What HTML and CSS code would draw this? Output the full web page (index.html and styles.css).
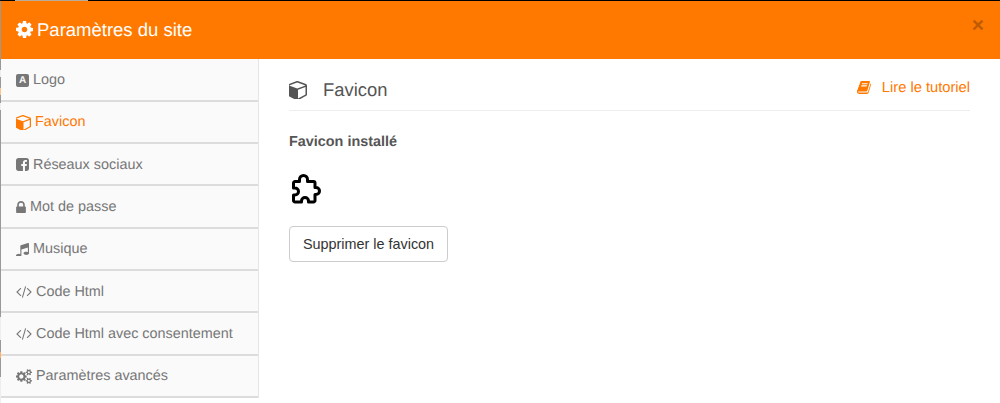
FILE: index.html
```html
<!DOCTYPE html>
<html lang="fr">
<head>
    <meta charset="UTF-8">
    <title>Paramètres du site</title>
    <link rel="stylesheet" href="styles.css">
</head>
<body>
    <div class="top-strip"></div>
    <div class="modal">
        <header class="modal-header">
            <h2 class="modal-title">
                <svg class="icon-title" viewBox="128 128 1536 1536"><path d="M1152 896q0-106-75-181t-181-75-181 75-75 181 75 181 181 75 181-75 75-181zm512-109v222q0 12-8 23t-20 13l-185 28q-19 54-39 91 35 50 107 138 10 12 10 25t-9 23q-27 37-99 108t-94 71q-12 0-26-9l-138-108q-44 23-91 38-16 136-29 186-7 28-36 28h-222q-14 0-24.500-8.500t-11.500-21.500l-28-184q-49-16-90-37l-141 107q-10 9-25 9-14 0-25-11-126-114-165-168-7-10-7-23 0-12 8-23 15-21 51-66.500t54-70.500q-27-50-41-99l-183-27q-13-2-21-12.500t-8-23.500v-222q0-12 8-23t19-13l186-28q14-46 39-92-40-57-107-138-10-12-10-24 0-10 9-23 26-36 98.500-107.500t94.500-71.500q13 0 26 10l138 107q44-23 91-38 16-136 29-186 7-28 36-28h222q14 0 24.500 8.500t11.500 21.500l28 184q49 16 90 37l142-107q9-9 24-9 13 0 25 10 129 119 165 170 7 8 7 22 0 12-8 23-15 21-51 66.500t-54 70.500q26 50 41 98l183 28q13 2 21 12.500t8 23.500z"/></svg>
                Paramètres du site
            </h2>
            <span class="modal-close">×</span>
        </header>

        <div class="modal-body">
            <!-- menu -->
            <nav class="sidebar">
                <a class="menu-item"><span class="icon-badge">A</span>Logo</a>
                <a class="menu-item active"><svg class="icon icon-cube-small" viewBox="128 128 1536 1536"><path d="M896 1629l640-349v-636l-640 233v752zm-64-865l698-254-698-254-698 254zm832-252v768q0 35-18 65t-49 47l-704 384q-28 16-61 16t-61-16l-704-384q-31-17-49-47t-18-65v-768q0-40 23-73t61-47l704-256q22-8 44-8t44 8l704 256q38 14 61 47t23 73z"/></svg>Favicon</a>
                <a class="menu-item"><svg class="icon" viewBox="128 128 1536 1536"><path d="M1376 128q119 0 203.500 84.500t84.500 203.500v960q0 119-84.500 203.500t-203.500 84.500h-188v-595h199l30-232h-229v-148q0-56 23.500-84t91.500-28l122-1v-207q-63-9-178-9-136 0-217.500 80t-81.500 226v171h-200v232h200v595h-532q-119 0-203.500-84.500t-84.500-203.500v-960q0-119 84.500-203.500t203.500-84.500h960z"/></svg>Réseaux sociaux</a>
                <a class="menu-item"><svg class="icon icon-lock" viewBox="320 128 1152 1536"><path d="M640 768h512v-192q0-106-75-181t-181-75-181 75-75 181v192zm832 96v576q0 40-28 68t-68 28h-960q-40 0-68-28t-28-68v-576q0-40 28-68t68-28h32v-192q0-184 132-316t316-132 316 132 132 316v192h32q40 0 68 28t28 68z"/></svg>Mot de passe</a>
                <a class="menu-item"><svg class="icon" viewBox="128 128 1536 1536"><path d="M1664 224v1120q0 50-34 89t-86 60.500-103.500 32-96.500 10.500-96.500-10.500-103.500-32-86-60.500-34-89 34-89 86-60.500 103.500-32 96.500-10.500q105 0 192 39v-537l-768 237v709q0 50-34 89t-86 60.500-103.500 32-96.500 10.500-96.500-10.500-103.500-32-86-60.500-34-89 34-89 86-60.500 103.500-32 96.500-10.500q105 0 192 39v-967q0-31 19-56.500t49-35.500l832-256q12-4 28-4 40 0 68 28t28 68z"/></svg>Musique</a>
                <a class="menu-item"><svg class="icon icon-wide" viewBox="0 0 1920 1792"><path d="M617 1399l-50 50q-10 10-23 10t-23-10l-466-466q-10-10-10-23t10-23l466-466q10-10 23-10t23 10l50 50q10 10 10 23t-10 23l-393 393 393 393q10 10 10 23t-10 23zm591-1067l-373 1291q-4 13-15.500 19.500t-23.500 2.500l-62-17q-13-4-19.500-15.500t-2.500-24.500l373-1291q4-13 15.500-19.500t23.500-2.500l62 17q13 4 19.500 15.500t2.500 24.500zm657 651l-466 466q-10 10-23 10t-23-10l-50-50q-10-10-10-23t10-23l393-393-393-393q-10-10-10-23t10-23l50-50q10-10 23-10t23 10l466 466q10 10 10 23t-10 23z"/></svg>Code Html</a>
                <a class="menu-item"><svg class="icon icon-wide" viewBox="0 0 1920 1792"><path d="M617 1399l-50 50q-10 10-23 10t-23-10l-466-466q-10-10-10-23t10-23l466-466q10-10 23-10t23 10l50 50q10 10 10 23t-10 23l-393 393 393 393q10 10 10 23t-10 23zm591-1067l-373 1291q-4 13-15.500 19.500t-23.500 2.500l-62-17q-13-4-19.500-15.500t-2.500-24.500l373-1291q4-13 15.500-19.500t23.500-2.500l62 17q13 4 19.500 15.500t2.500 24.500zm657 651l-466 466q-10 10-23 10t-23-10l-50-50q-10-10-10-23t10-23l393-393-393-393q-10-10-10-23t10-23l50-50q10-10 23-10t23 10l466 466q10 10 10 23t-10 23z"/></svg>Code Html avec consentement</a>
                <a class="menu-item"><svg class="icon icon-wide" viewBox="0 0 1920 1792"><path d="M896 896q0-106-75-181t-181-75-181 75-75 181 75 181 181 75 181-75 75-181zm768 512q0-52-38-90t-90-38-90 38-38 90q0 53 37.500 90.500t90.500 37.500 90.500-37.500 37.500-90.500zm0-1024q0-52-38-90t-90-38-90 38-38 90q0 53 37.500 90.500t90.500 37.500 90.500-37.500 37.500-90.500zm-384 421v185q0 10-7 19.500t-16 10.500l-155 24q-11 35-32 76 34 48 90 115 7 11 7 20 0 12-7 19-23 30-82.500 89.500t-78.500 59.500q-11 0-21-7l-115-90q-37 19-77 31-11 108-23 155-7 24-30 24h-186q-11 0-20-7.500t-10-17.500l-23-153q-34-10-75-31l-118 89q-7 7-20 7-11 0-21-8-144-133-144-160 0-9 7-19 10-14 41-53t47-61q-23-44-35-82l-152-24q-10-1-17-9.500t-7-19.500v-185q0-10 7-19.500t16-10.500l155-24q11-35 32-76-34-48-90-115-7-11-7-20 0-12 7-20 22-30 82-89t79-59q11 0 21 7l115 90q34-18 77-32 11-108 23-154 7-24 30-24h186q11 0 20 7.500t10 17.500l23 153q34 10 75 31l118-89q8-7 20-7 11 0 21 8 144 133 144 160 0 8-7 19-12 16-42 54t-45 60q23 48 34 82l152 23q10 2 17 10.500t7 19.500zm640 533v140q0 16-149 31-12 27-30 52 51 113 51 138 0 4-4 7-122 71-124 71-8 0-46-47t-52-68q-20 2-30 2t-30-2q-14 21-52 68t-46 47q-2 0-124-71-4-3-4-7 0-25 51-138-18-25-30-52-149-15-149-31v-140q0-16 149-31 13-29 30-52-51-113-51-138 0-4 4-7 4-2 35-20t59-34 30-16q8 0 46 46.500t52 67.500q20-2 30-2t30 2q51-71 92-112l6-2q4 0 124 70 4 3 4 7 0 25-51 138 17 23 30 52 149 15 149 31zm0-1024v140q0 16-149 31-12 27-30 52 51 113 51 138 0 4-4 7-122 71-124 71-8 0-46-47t-52-68q-20 2-30 2t-30-2q-14 21-52 68t-46 47q-2 0-124-71-4-3-4-7 0-25 51-138-18-25-30-52-149-15-149-31v-140q0-16 149-31 13-29 30-52-51-113-51-138 0-4 4-7 4-2 35-20t59-34 30-16q8 0 46 46.500t52 67.500q20-2 30-2t30 2q51-71 92-112l6-2q4 0 124 70 4 3 4 7 0 25-51 138 17 23 30 52 149 15 149 31z"/></svg>Paramètres avancés</a>
            </nav>

            <!-- contenu -->
            <main class="content">
                <div class="content-head">
                    <h3 class="content-title">
                        <svg class="icon-cube" viewBox="128 128 1536 1536"><path d="M896 1629l640-349v-636l-640 233v752zm-64-865l698-254-698-254-698 254zm832-252v768q0 35-18 65t-49 47l-704 384q-28 16-61 16t-61-16l-704-384q-31-17-49-47t-18-65v-768q0-40 23-73t61-47l704-256q22-8 44-8t44 8l704 256q38 14 61 47t23 73z"/></svg>
                        Favicon
                    </h3>
                    <a class="tuto-link">
                        <svg class="icon-book" viewBox="64 128 1664 1536"><path d="M1703 478q40 57 18 129l-275 906q-19 64-76.500 107.500t-122.500 43.500h-923q-77 0-148.500-53.500t-99.500-131.500q-24-67-2-127 0-4 3-27t4-37q1-8-3-21.500t-3-19.500q2-11 8-21t16.500-23.500 16.500-23.500q23-38 45-91.500t30-91.500q3-10 .5-30t-.5-28q3-11 17-28t17-23q21-36 42-92t25-90q1-9-2.500-32t.5-28q4-13 22-30.500t22-22.500q19-26 42.500-84.500t27.500-96.500q1-8-3-25.500t-2-26.500q2-8 9-18t18-23 17-21q8-12 16.500-35t15-43.500 17.500-44.500 22-39 30-30 41-14.500 54 6.500l-1 3q43-10 58-10h761q74 0 114 56t18 130l-274 906q-36 119-71.500 153.500t-128.500 34.500h-869q-27 0-38 15-11 16-1 43 24 70 144 70h923q29 0 56-15.500t35-41.500l300-987q7-22 5-57 38 15 59 43zm-1064 2q-4 13 2 22.500t20 9.500h608q13 0 25.500-9.500t16.500-22.500l21-64q4-13-2-22.500t-20-9.500h-608q-13 0-25.500 9.500t-16.500 22.500zm-83 256q-4 13 2 22.500t20 9.500h608q13 0 25.500-9.500t16.500-22.500l21-64q4-13-2-22.500t-20-9.500h-608q-13 0-25.500 9.500t-16.500 22.500z"/></svg>
                        Lire le tutoriel
                    </a>
                </div>
                <p class="installed">Favicon installé</p>
                <svg class="puzzle" viewBox="0 0 30 30"><path d="M7.500 7.500v-2a4 4 0 0 1 8 0v2h6a1.500 1.500 0 0 1 1.500 1.500v4.500h1a3.500 3.500 0 0 1 0 7h-1v6a1.500 1.500 0 0 1-1.500 1.500h-5v-1a3.500 3.500 0 0 0-7 0v1h-6.500a1.500 1.500 0 0 1-1.500-1.500v-5.500h1.500a3.500 3.500 0 0 0 0-7h-1.500v-5a1.500 1.500 0 0 1 1.500-1.500z"/></svg>
                <button class="btn-delete">Supprimer le favicon</button>
            </main>
        </div>
    </div>
</body>
</html>
```

FILE: styles.css
```css
html, body {
    height: 100%;
}

body {
    margin: 0;
    overflow: hidden;
    background: linear-gradient(to bottom,
        #999 70px, #eee 70px, #eee 77px,
        #999 77px, #999 88px, #ffc48a 88px, #ffc48a 95px,
        #999 95px, #999 103px, #eee 103px, #eee 110px,
        #999 110px, #999 317px, #eee 317px, #eee 340px,
        #999 340px, #999 352px, #ffb066 352px, #ffb066 358px,
        #999 358px, #999 377px, #eee 377px);
    font-family: "Liberation Sans", Arial, sans-serif;
    color: #555;
    text-rendering: geometricPrecision;
}

.top-strip {
    height: 1px;
    background: linear-gradient(to right, #000 15px, #b9ac9a 15px, #b9ac9a 88px, #000 88px);
}

.modal {
    height: 402px;
    margin-left: 1px;
    background-color: #fff;
    overflow: hidden;
}

.modal-header {
    display: flex;
    justify-content: space-between;
    align-items: center;
    height: 57.5px;
    padding: 0 15px;
    box-sizing: border-box;
    background-color: #ff7900;
}

.modal-title {
    display: flex;
    align-items: center;
    gap: 4px;
    margin: 0;
    font-size: 18.5px;
    font-weight: normal;
    color: #fff;
}

.icon-title {
    width: 17px;
    height: 17px;
    fill: #fff;
}

.modal-close {
    margin: -7px 1px 0 0;
    font-size: 21px;
    font-weight: bold;
    color: #000;
    opacity: 0.25;
}

.modal-body {
    display: flex;
}

.sidebar {
    width: 257px;
    flex-shrink: 0;
    padding-top: 1px;
    background-color: #fafafa;
    border-right: 1px solid #e5e5e5;
}

.menu-item {
    display: flex;
    align-items: center;
    gap: 4px;
    height: 42.3px;
    padding: 1px 0 0 15px;
    box-sizing: border-box;
    border-bottom: 2px solid #dcdcdc;
    font-size: 14.4px;
    color: #777;
}

.menu-item.active {
    color: #ff7900;
}

.icon {
    width: 13px;
    height: 13px;
    fill: currentColor;
}

.icon-cube-small {
    width: 15px;
    height: 15px;
}

.icon-lock {
    width: 10px;
}

.icon-wide {
    width: 16px;
    height: 15px;
}

.icon-badge {
    width: 13px;
    height: 13px;
    border-radius: 2px;
    background-color: #777;
    color: #fafafa;
    font-size: 10px;
    font-weight: bold;
    line-height: 13px;
    text-align: center;
}

.content {
    flex: 1;
    padding: 0 30px;
}

.content-head {
    display: flex;
    justify-content: space-between;
    height: 51px;
    border-bottom: 1px solid #eee;
}

.content-title {
    display: flex;
    align-items: center;
    gap: 16px;
    height: 62px;
    margin: 0;
    font-size: 18.4px;
    font-weight: normal;
}

.icon-cube {
    width: 18px;
    height: 18px;
    fill: #555;
}

.tuto-link {
    display: flex;
    align-items: center;
    gap: 11px;
    height: 58px;
    font-size: 14.7px;
    color: #ff7900;
}

.icon-book {
    width: 14px;
    height: 13px;
    fill: #ff7900;
}

.installed {
    margin: 21px 0 0;
    font-size: 14.4px;
    font-weight: bold;
    line-height: 20px;
}

.puzzle {
    display: block;
    width: 30px;
    height: 30px;
    margin: 22px 0 0 3px;
    fill: none;
    stroke: #000;
    stroke-width: 3;
    stroke-linejoin: round;
}

.btn-delete {
    display: block;
    width: 159px;
    height: 36px;
    margin-top: 22px;
    padding: 0;
    background-color: #fff;
    border: 1px solid #ccc;
    border-radius: 4px;
    font-family: inherit;
    font-size: 14.4px;
    color: #333;
}
```
